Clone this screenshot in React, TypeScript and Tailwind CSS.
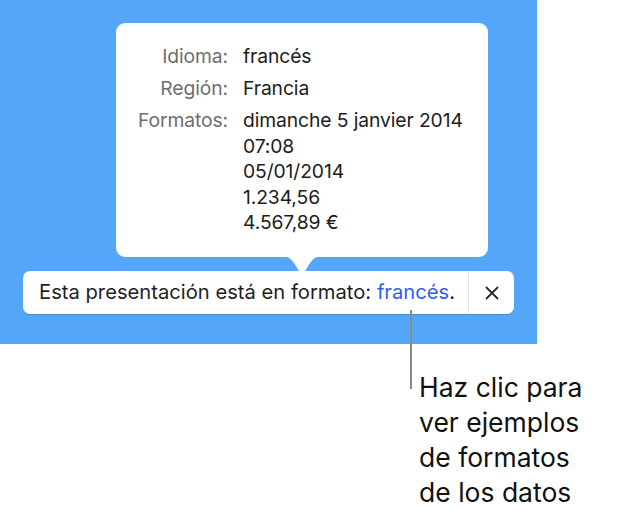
import React from "react";

export default function App() {
  return (
    <div className="relative w-[617px] h-[510px] bg-white overflow-hidden" style={{ fontFamily: "Inter, 'Noto Sans', sans-serif" }}>
      <div className="flex flex-col w-[537px] h-[344px] bg-[#54a7f8]">
        <div className="relative ml-[116px] mt-[23px] w-[372px] h-[234px] bg-white rounded-[9px]">
          <div className="grid grid-cols-[112px_auto] gap-x-[15px] pt-[21px] text-[19.3px] leading-[25.5px] tracking-[-0.1px]">
            <div className="text-right text-[#6e6e6e] mb-[6.5px]">Idioma:</div>
            <div className="text-[#1c1c1c] mb-[6.5px]">francés</div>
            <div className="text-right text-[#6e6e6e] mb-[6.5px]">Región:</div>
            <div className="text-[#1c1c1c] mb-[6.5px]">Francia</div>
            <div className="text-right text-[#6e6e6e]">Formatos:</div>
            <div className="flex flex-col text-[#1c1c1c]">
              <span>dimanche 5 janvier 2014</span>
              <span>07:08</span>
              <span>05/01/2014</span>
              <span>1.234,56</span>
              <span>4.567,89 €</span>
            </div>
          </div>
          <svg className="absolute left-[164px] top-[233px]" width="44" height="22" viewBox="0 0 44 22">
            <path d="M0 0 C8 0 10 2 14 7 L22 20 L30 7 C34 2 36 0 44 0 Z" fill="#ffffff" />
          </svg>
        </div>
        <div className="relative flex items-stretch ml-[23px] mt-[14px] w-[491px] h-[43px] bg-white rounded-[7px] shadow-[0_1px_1px_rgba(0,0,0,0.15)]">
          <div className="flex items-center flex-1 pl-[16px] text-[20.2px] text-[#1f1f1f] whitespace-nowrap">
            <span>Esta presentación está en formato:&nbsp;</span>
            <span className="text-[#2f5ef2]">francés</span>
            <span>.</span>
          </div>
          <div className="w-px bg-[#e3e3e3] my-[1px]" />
          <div className="flex items-center justify-center w-[45px]">
            <svg width="14" height="14" viewBox="0 0 14 14">
              <path d="M1.5 1.5 L12.5 12.5 M12.5 1.5 L1.5 12.5" stroke="#2a2a2a" strokeWidth="1.8" strokeLinecap="round" />
            </svg>
          </div>
        </div>
      </div>
      <div className="absolute left-[410px] top-[310px] w-[2px] h-[79px] bg-[#8a8a8a]" />
      <div className="ml-[419px] mt-[26px] text-[26.5px] leading-[35px] text-[#111]" style={{ fontFamily: "Inter, 'Noto Sans', sans-serif" }}>
        <div>Haz clic para</div>
        <div>ver ejemplos</div>
        <div>de formatos</div>
        <div>de los datos</div>
      </div>
    </div>
  );
}
